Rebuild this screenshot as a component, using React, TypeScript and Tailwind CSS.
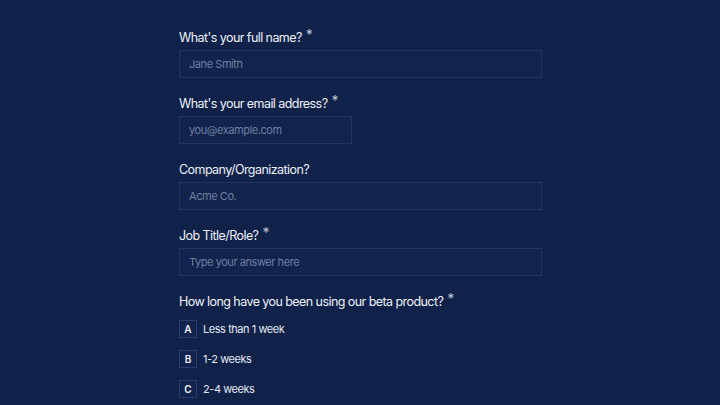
import React from 'react';

const fields = [
  { label: "What's your full name?", placeholder: 'Jane Smith', required: true, width: 'w-full' },
  { label: "What's your email address?", placeholder: 'you@example.com', required: true, width: 'w-[173px]' },
  { label: 'Company/Organization?', placeholder: 'Acme Co.', required: false, width: 'w-full' },
  { label: 'Job Title/Role?', placeholder: 'Type your answer here', required: true, width: 'w-full' },
];

const options = [
  { key: 'A', text: 'Less than 1 week' },
  { key: 'B', text: '1-2 weeks' },
  { key: 'C', text: '2-4 weeks' },
];

function Label({ text, required }: { text: string; required: boolean }) {
  return (
    <div className="h-4 flex items-center text-[12.5px] leading-4 tracking-[-0.045em] text-[#eef1f7]">
      {text}
      {required && <span className="ml-[4px] -mt-[7px] text-[14px] text-[#b9c3d8]">*</span>}
    </div>
  );
}

export default function App() {
  return (
    <div
      className="w-[720px] h-[405px] overflow-hidden bg-[#10214a]"
      style={{ fontFamily: 'Inter, "Liberation Sans", sans-serif' }}
    >
      <div className="ml-[179px] w-[363px] pt-[30px] flex flex-col">
        {fields.map(f => (
          <div key={f.label} className="flex flex-col mb-[18px]">
            <Label text={f.label} required={f.required} />
            <div
              className={`${f.width} mt-[4px] h-[28px] flex items-center px-[9px] bg-[#12244d] border border-[#22375f] text-[11px] tracking-[-0.04em] text-[#6f7fa0]`}
            >
              {f.placeholder}
            </div>
          </div>
        ))}
        <Label text="How long have you been using our beta product?" required />
        <div className="mt-[10px] flex flex-col gap-[12px]">
          {options.map(o => (
            <div key={o.key} className="flex items-center h-[18px]">
              <div className="w-[18px] h-[18px] flex items-center justify-center border border-[#2a3f68] bg-[#12244d] text-[10px] font-semibold text-[#eef1f7]">
                {o.key}
              </div>
              <span className="ml-[6px] text-[11px] tracking-[-0.04em] text-[#e3e8f2]">{o.text}</span>
            </div>
          ))}
        </div>
      </div>
    </div>
  );
}
